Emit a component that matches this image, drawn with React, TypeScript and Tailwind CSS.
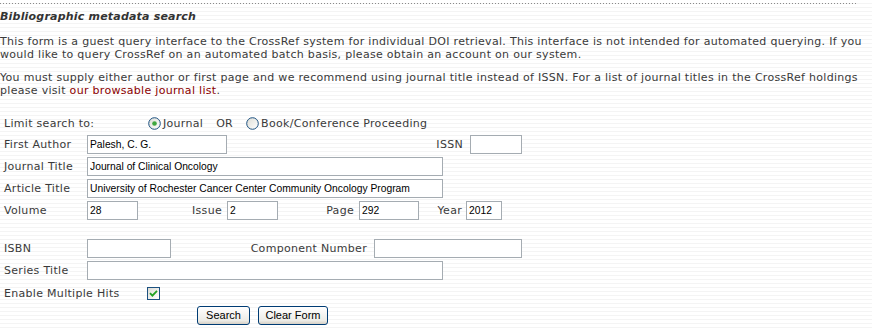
import React from "react";

const inputCls =
  "h-[19px] border border-[#a5acb2] bg-white px-[2px] text-[10.3px] leading-[17px] tracking-normal text-black outline-none font-['Liberation_Sans',Arial,sans-serif]";

function Radio({ checked }: { checked?: boolean }) {
  return (
    <svg width="13" height="13" viewBox="0 0 13 13" className="flex-none">
      <defs>
        <linearGradient id={checked ? "rg1" : "rg2"} x1="0" y1="0" x2="1" y2="1">
          <stop offset="0" stopColor="#dcdcd5" />
          <stop offset="1" stopColor="#ffffff" />
        </linearGradient>
      </defs>
      <circle cx="6.5" cy="6.5" r="5.8" fill={`url(#${checked ? "rg1" : "rg2"})`} stroke="#1c5180" strokeWidth="1" />
      {checked && <circle cx="6.5" cy="6.5" r="2.3" fill="#3fa73f" />}
    </svg>
  );
}

function Checkbox() {
  return (
    <span className="flex h-[13px] w-[13px] flex-none items-center justify-center border border-[#1c5180] bg-[linear-gradient(135deg,#dcdcd5,#ffffff)]">
      <svg width="9" height="9" viewBox="0 0 9 9">
        <path d="M1 4.2 L3.4 6.6 L8 1.8" fill="none" stroke="#21a121" strokeWidth="1.8" />
      </svg>
    </span>
  );
}

function XpButton({ children, w }: { children: React.ReactNode; w: string }) {
  return (
    <button
      type="button"
      className={`${w} h-[19px] rounded-[3px] border border-[#003c74] bg-[linear-gradient(to_bottom,#ffffff,#ecebe6_80%,#d6d0c5)] text-[11px] leading-[15px] tracking-normal text-black font-['Liberation_Sans',Arial,sans-serif]`}
    >
      {children}
    </button>
  );
}

export default function App() {
  return (
    <div className="min-h-[328px] w-[872px] overflow-hidden bg-[repeating-linear-gradient(to_bottom,#ffffff_0px,#ffffff_3px,#f4f4f4_3px,#f4f4f4_4px)] font-['DejaVu_Sans',Verdana,sans-serif] text-[11px] leading-[13px] tracking-[0.3px] text-[#3a3a3a]">
      <div className="pt-[3px]">
        <div className="h-px w-[858px] bg-[linear-gradient(to_right,#8a8a8a_1px,transparent_1px)] bg-[length:3px_1px]" />
      </div>

      <h2 className="mt-[6px] font-bold italic tracking-[0.2px] text-[#333]">Bibliographic metadata search</h2>

      <p className="mt-[12px] w-[866px]">
        This form is a guest query interface to the CrossRef system for individual DOI retrieval. This interface is not
        intended for automated querying. If you would like to query CrossRef on an automated batch basis, please obtain an
        account on our system.
      </p>

      <p className="mt-[10px] w-[866px]">
        You must supply either author or first page and we recommend using journal title instead of ISSN. For a list of
        journal titles in the CrossRef holdings please visit <a className="text-[#8b0000]">our browsable journal list</a>.
      </p>

      <div className="mt-[17px] flex h-[19px] items-center pl-[4px]">
        <span className="w-[144px] flex-none">Limit search to:</span>
        <Radio checked />
        <span className="ml-[2px]">Journal</span>
        <span className="ml-[13px]">OR</span>
        <span className="ml-[13px] flex items-center">
          <Radio />
          <span className="ml-[2px]">Book/Conference Proceeding</span>
        </span>
      </div>

      <div className="flex h-[22px] items-center pl-[4px]">
        <span className="w-[83px] flex-none">First Author</span>
        <input className={`${inputCls} w-[140px]`} defaultValue="Palesh, C. G." />
        <span className="w-[243px] flex-none pr-[7px] text-right">ISSN</span>
        <input className={`${inputCls} w-[52px]`} />
      </div>

      <div className="flex h-[22px] items-center pl-[4px]">
        <span className="w-[83px] flex-none">Journal Title</span>
        <input className={`${inputCls} w-[356px]`} defaultValue="Journal of Clinical Oncology" />
      </div>

      <div className="flex h-[22px] items-center pl-[4px]">
        <span className="w-[83px] flex-none">Article Title</span>
        <input
          className={`${inputCls} w-[356px]`}
          defaultValue="University of Rochester Cancer Center Community Oncology Program"
        />
      </div>

      <div className="flex h-[22px] items-center pl-[4px]">
        <span className="w-[83px] flex-none">Volume</span>
        <input className={`${inputCls} w-[51px]`} defaultValue="28" />
        <span className="w-[89px] flex-none pr-[5px] text-right">Issue</span>
        <input className={`${inputCls} w-[51px]`} defaultValue="2" />
        <span className="w-[81px] flex-none pr-[5px] text-right">Page</span>
        <input className={`${inputCls} w-[60px]`} defaultValue="292" />
        <span className="w-[47px] flex-none pr-[4px] text-right">Year</span>
        <input className={`${inputCls} w-[36px]`} defaultValue="2012" />
      </div>

      <div className="mt-[16px] flex h-[22px] items-center pl-[4px]">
        <span className="w-[83px] flex-none">ISBN</span>
        <input className={`${inputCls} w-[84px]`} />
        <span className="w-[203px] flex-none pr-[7px] text-right">Component Number</span>
        <input className={`${inputCls} w-[148px]`} />
      </div>

      <div className="flex h-[22px] items-center pl-[4px]">
        <span className="w-[83px] flex-none">Series Title</span>
        <input className={`${inputCls} w-[356px]`} />
      </div>

      <div className="mt-[1px] flex h-[22px] items-center pl-[4px]">
        <span className="w-[143px] flex-none">Enable Multiple Hits</span>
        <Checkbox />
      </div>

      <div className="flex h-[22px] items-center gap-[8px] pl-[197px]">
        <XpButton w="w-[53px]">Search</XpButton>
        <XpButton w="w-[70px]">Clear Form</XpButton>
      </div>
    </div>
  );
}
